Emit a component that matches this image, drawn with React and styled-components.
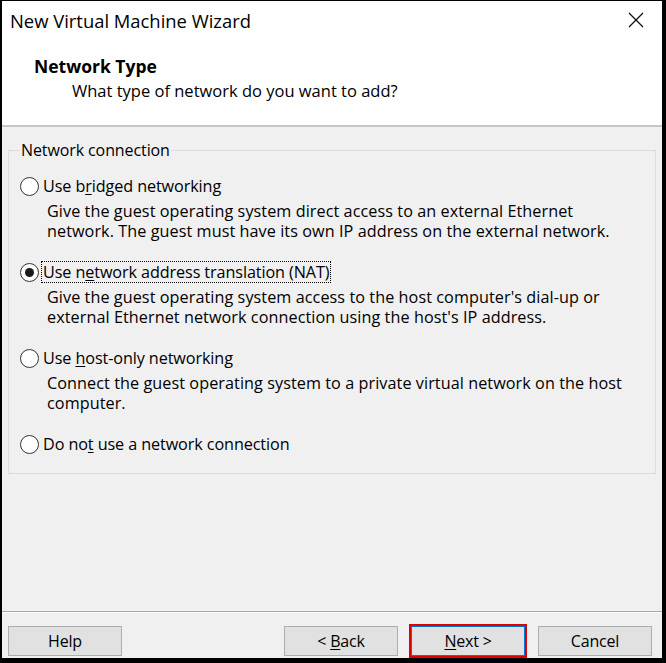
import React from "react";
import styled, { createGlobalStyle } from "styled-components";

const Global = createGlobalStyle`
  html, body { margin: 0; padding: 0; background: #000; }
  body { font-family: "Open Sans", "Noto Sans", sans-serif; color: #000; }
  * { box-sizing: border-box; }
`;

const Frame = styled.div`
  width: 666px;
  height: 663px;
  border-style: solid;
  border-color: #000;
  border-width: 1px 4px 5px 2px;
  display: flex;
  flex-direction: column;
  background: #f0f0f0;
  overflow: hidden;
`;

const Header = styled.header`
  background: #fff;
  height: 124px;
  display: flex;
  flex-direction: column;
`;

const TitleBar = styled.div`
  height: 38px;
  display: flex;
  align-items: center;
  justify-content: space-between;
  padding: 0 17px 0 8px;
`;

const Title = styled.div`
  font-size: 18.4px;
  color: #000;
`;

const CloseBtn = styled.div`
  width: 18px;
  height: 18px;
  display: flex;
  align-items: center;
  justify-content: center;
`;

const HeaderText = styled.div`
  padding: 15px 0 0 32px;
  display: flex;
  flex-direction: column;
`;

const PageTitle = styled.div`
  font-weight: 700;
  font-size: 17.5px;
  line-height: 24px;
`;

const PageSub = styled.div`
  font-size: 16.5px;
  line-height: 24px;
  margin-top: 1px;
  padding-left: 38px;
`;

const HeaderRule = styled.div`
  height: 2px;
  background: #c6c6c6;
`;

const Body = styled.main`
  flex: 1;
  padding: 13px 6px 0 6px;
  display: flex;
  flex-direction: column;
`;

const Group = styled.fieldset`
  margin: 0;
  border: 1px solid #dcdcdc;
  border-radius: 0;
  padding: 0 0 19px 11px;
  display: flex;
  flex-direction: column;
`;

const Legend = styled.legend`
  font-size: 16px;
  line-height: 20px;
  padding: 0 1px;
  margin-left: 0;
  letter-spacing: -0.1px;
`;

const Option = styled.div`
  display: flex;
  flex-direction: column;
  margin-top: ${(p) => (p.$first ? "16px" : "21px")};
`;

const RadioRow = styled.label`
  display: flex;
  align-items: center;
  height: 20px;
  gap: 3px;
`;

const Circle = styled.span`
  width: 19px;
  height: 19px;
  border-radius: 50%;
  border: 1.5px solid #333;
  background: #fff;
  display: flex;
  align-items: center;
  justify-content: center;
  flex: none;
  &::after {
    content: "";
    width: 9px;
    height: 9px;
    border-radius: 50%;
    background: ${(p) => (p.$checked ? "#1a1a1a" : "transparent")};
  }
`;

const Label = styled.span`
  font-size: 16.2px;
  line-height: 20px;
  padding: 0 1px;
  letter-spacing: -0.1px;
  outline: ${(p) => (p.$focus ? "1px dotted #000" : "none")};
`;

const Desc = styled.div`
  font-size: 16.2px;
  line-height: 20px;
  margin-top: 5px;
  padding-left: 27px;
  padding-right: 8px;
  letter-spacing: 0.07px;
  white-space: nowrap;
`;

const Spacer = styled.div`
  flex: 1;
`;

const FooterRule = styled.div`
  height: 2px;
  border-top: 1px solid #a8a8a8;
  border-bottom: 1px solid #fdfdfd;
`;

const ButtonRow = styled.div`
  display: flex;
  align-items: center;
  padding: 13px 10px 2px 6px;
  gap: 13px;
`;

const Button = styled.button`
  width: 114px;
  height: 30px;
  background: #e1e1e1;
  border: 1px solid ${(p) => (p.$default ? "#0078d7" : "#adadad")};
  font-family: inherit;
  font-size: 16px;
  letter-spacing: -0.2px;
  color: #000;
  padding: 0;
  margin-left: ${(p) => (p.$push ? "auto" : "0")};
  outline: ${(p) => (p.$default ? "2px solid #e10000" : "none")};
  outline-offset: 0;
`;

const U = styled.span`
  text-decoration: underline;
  text-underline-offset: 2px;
`;

const options = [
  {
    label: (
      <>
        Use b<U>r</U>idged networking
      </>
    ),
    desc: [
      "Give the guest operating system direct access to an external Ethernet",
      "network. The guest must have its own IP address on the external network.",
    ],
  },
  {
    label: (
      <>
        Use n<U>e</U>twork address translation (NAT)
      </>
    ),
    desc: [
      "Give the guest operating system access to the host computer's dial-up or",
      "external Ethernet network connection using the host's IP address.",
    ],
    checked: true,
  },
  {
    label: (
      <>
        Use <U>h</U>ost-only networking
      </>
    ),
    desc: [
      "Connect the guest operating system to a private virtual network on the host",
      "computer.",
    ],
  },
  {
    label: (
      <>
        Do no<U>t</U> use a network connection
      </>
    ),
  },
];

export default function App() {
  return (
    <>
      <Global />
      <Frame>
        <Header>
          <TitleBar>
            <Title>New Virtual Machine Wizard</Title>
            <CloseBtn>
              <svg width="16" height="16" viewBox="0 0 16 16">
                <path d="M1 1 L15 15 M15 1 L1 15" stroke="#111" strokeWidth="1.3" fill="none" />
              </svg>
            </CloseBtn>
          </TitleBar>
          <HeaderText>
            <PageTitle>Network Type</PageTitle>
            <PageSub>What type of network do you want to add?</PageSub>
          </HeaderText>
        </Header>
        <HeaderRule />
        <Body>
          <Group>
            <Legend>Network connection</Legend>
            {options.map((o, i) => (
              <Option key={i} $first={i === 0}>
                <RadioRow>
                  <Circle $checked={o.checked} />
                  <Label $focus={o.checked}>{o.label}</Label>
                </RadioRow>
                {o.desc && (
                  <Desc>
                    {o.desc.map((line, j) => (
                      <React.Fragment key={j}>
                        {j > 0 && <br />}
                        {line}
                      </React.Fragment>
                    ))}
                  </Desc>
                )}
              </Option>
            ))}
          </Group>
          <Spacer />
        </Body>
        <FooterRule />
        <ButtonRow>
          <Button>Help</Button>
          <Button $push>
            &lt; <U>B</U>ack
          </Button>
          <Button $default>
            <U>N</U>ext &gt;
          </Button>
          <Button>Cancel</Button>
        </ButtonRow>
      </Frame>
    </>
  );
}
